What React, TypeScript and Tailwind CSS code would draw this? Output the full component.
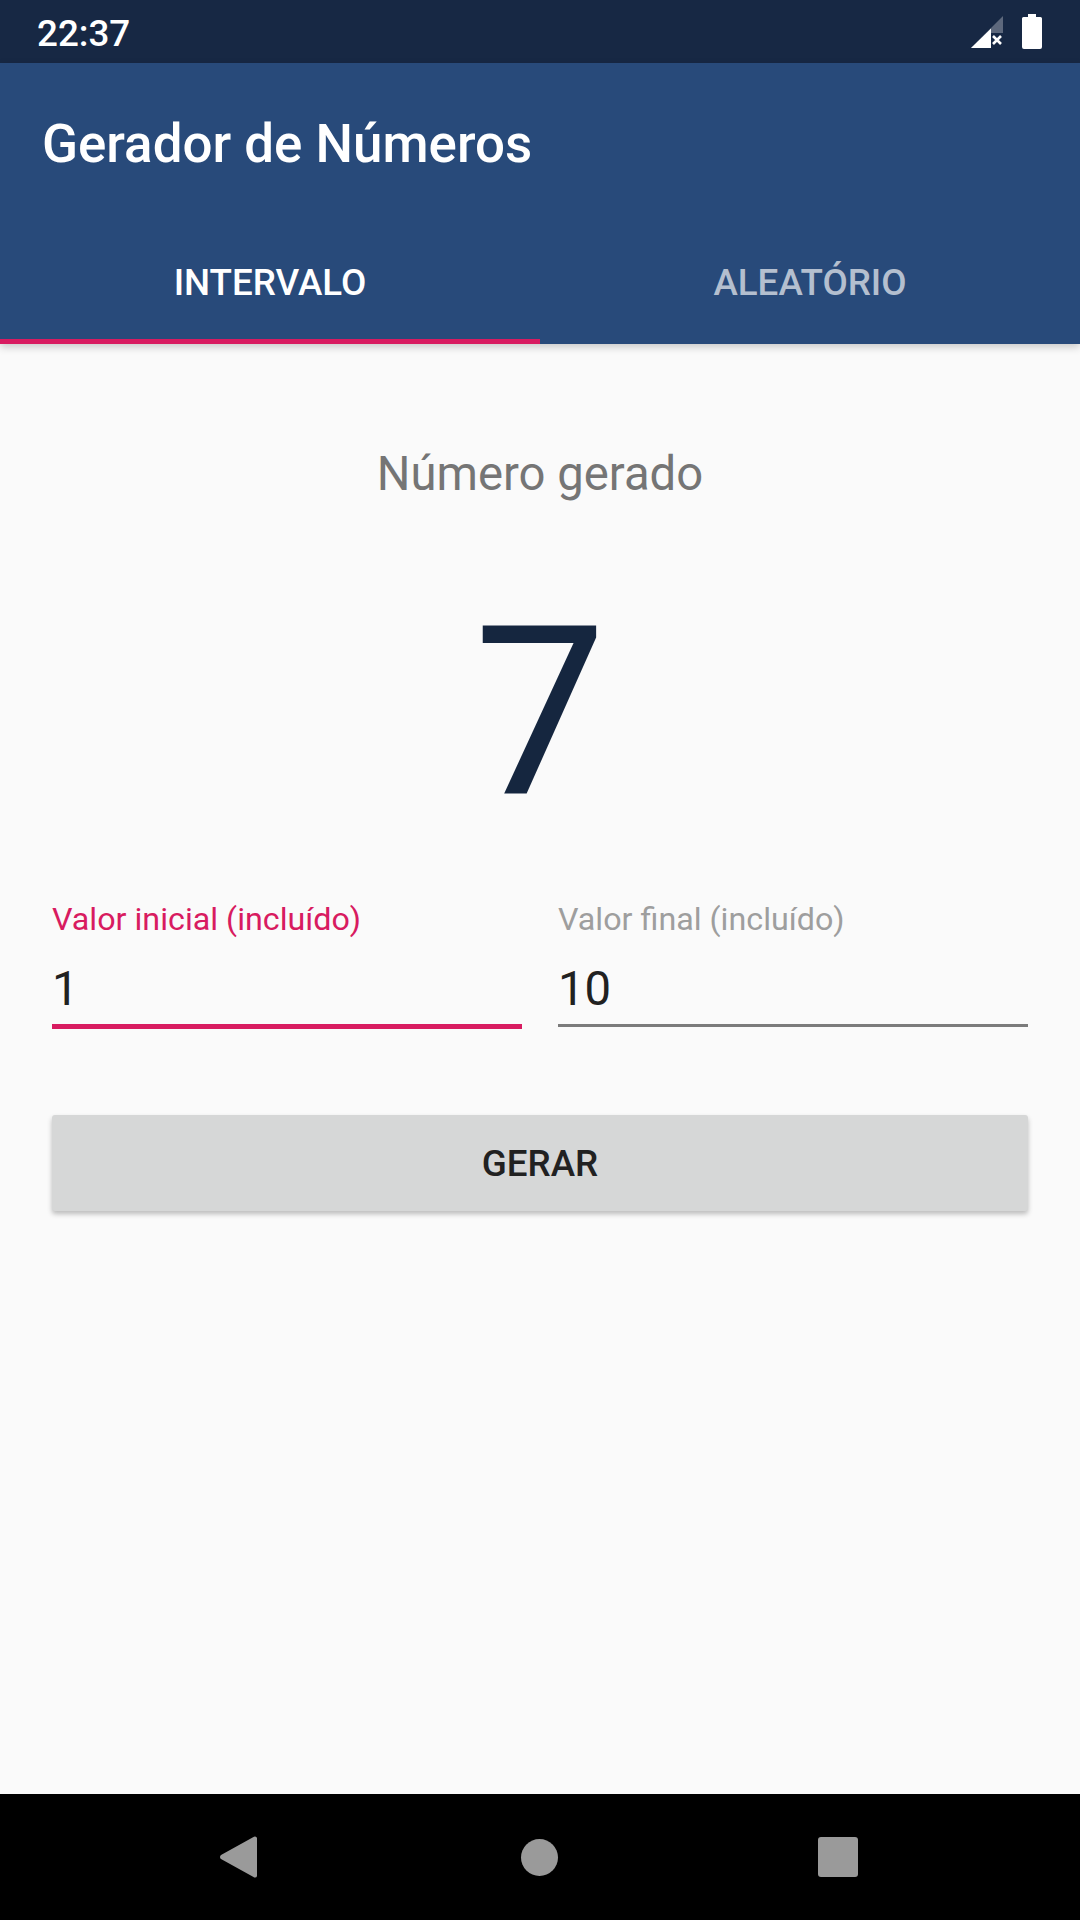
const roboto = "font-['Roboto',sans-serif]";

function Field({ label, value, active }: { label: string; value: string; active?: boolean }) {
  return (
    <div className="flex-1 flex flex-col">
      <div className={`h-[36px] text-[32.25px] leading-[36px] ${active ? "text-[#d81b60]" : "text-[#9e9e9e]"}`}>
        {label}
      </div>
      <div className="h-[70px] mt-[17px] text-[47.25px] leading-[70px] text-[#212121]">{value}</div>
      <div className={active ? "h-[5px] bg-[#d81b60]" : "h-[3px] bg-[#7b7b7b]"} />
    </div>
  );
}

export default function App() {
  return (
    <div className={`${roboto} flex flex-col w-[1080px] h-[1920px] bg-[#fafafa]`}>
      <div className="h-[63px] bg-[#172844] flex items-center justify-between pl-[37px] pr-[38px]">
        <div className="text-[36.75px] font-medium text-white mt-[4px]">22:37</div>
        <div className="flex items-center gap-[19px]">
          <svg width="32" height="32" viewBox="0 0 32 32">
            <path d="M32 0V17H20V32H0Z" fill="#ffffff" fillOpacity="0.3" />
            <path d="M20 12.500V32H0Z" fill="#ffffff" />
            <path d="M22 20l8 8M30 20l-8 8" stroke="#ffffff" strokeWidth="2.6" />
          </svg>
          <svg width="20" height="35" viewBox="0 0 20 35">
            <path d="M6 0h8v3h4.500a1.500 1.500 0 0 1 1.500 1.500V33a2 2 0 0 1-2 2H2a2 2 0 0 1-2-2V4.500A1.500 1.500 0 0 1 1.500 3H6Z" fill="#ffffff" />
          </svg>
        </div>
      </div>

      <div className="bg-[#284a7a] h-[281px] flex flex-col shadow-[0_3px_8px_rgba(0,0,0,0.2)] relative">
        <div className="h-[129px] pl-[42px] pt-[48px] text-[52.9px] leading-[66px] font-medium text-white">
          Gerador de Números
        </div>
        <div className="flex-1 flex">
          <div className="flex-1 flex flex-col">
            <div className="flex-1 flex items-center justify-center pt-[34px] text-[36.75px] font-medium text-white">
              INTERVALO
            </div>
            <div className="h-[5px] bg-[#d81b60]" />
          </div>
          <div className="flex-1 flex flex-col">
            <div className="flex-1 flex items-center justify-center pt-[34px] text-[36.75px] font-medium text-[#b4bfcf]">
              ALEATÓRIO
            </div>
            <div className="h-[5px]" />
          </div>
        </div>
      </div>

      <div className="flex-1 flex flex-col px-[52px]">
        <div className="mt-[100px] text-center text-[47.25px] leading-[60px] text-[#757575]">Número gerado</div>
        <div className="mt-[69px] h-[280px] text-center text-[236px] leading-[280px] font-normal text-[#15263f]">7</div>
        <div className="mt-[48px] flex gap-[36px]">
          <Field label="Valor inicial (incluído)" value="1" active />
          <Field label="Valor final (incluído)" value="10" />
        </div>
        <div className="mt-[86px] h-[96px] pt-[2px] rounded-[3px] bg-[#d6d7d7] flex items-center justify-center text-[36.75px] font-medium text-[#212121] shadow-[0_3px_5px_rgba(0,0,0,0.25)]">
          GERAR
        </div>
      </div>

      <div className="h-[126px] bg-black flex items-center">
        <div className="ml-[220px] mr-[264px]">
          <svg className="block" width="37" height="42" viewBox="0 0 37 42">
            <path d="M35 0.500a2 2 0 0 1 2 1.500V40a2 2 0 0 1-2 1.500 2 2 0 0 1-1.500-0.500L1 23a2.500 2.500 0 0 1 0-4L33.500 1a2 2 0 0 1 1.500-0.500Z" fill="#9a9a9a" />
          </svg>
        </div>
        <div className="w-[37px] h-[37px] rounded-full bg-[#9a9a9a]" />
        <div className="ml-[260px] w-[40px] h-[40px] rounded-[3px] bg-[#9a9a9a]" />
      </div>
    </div>
  );
}
